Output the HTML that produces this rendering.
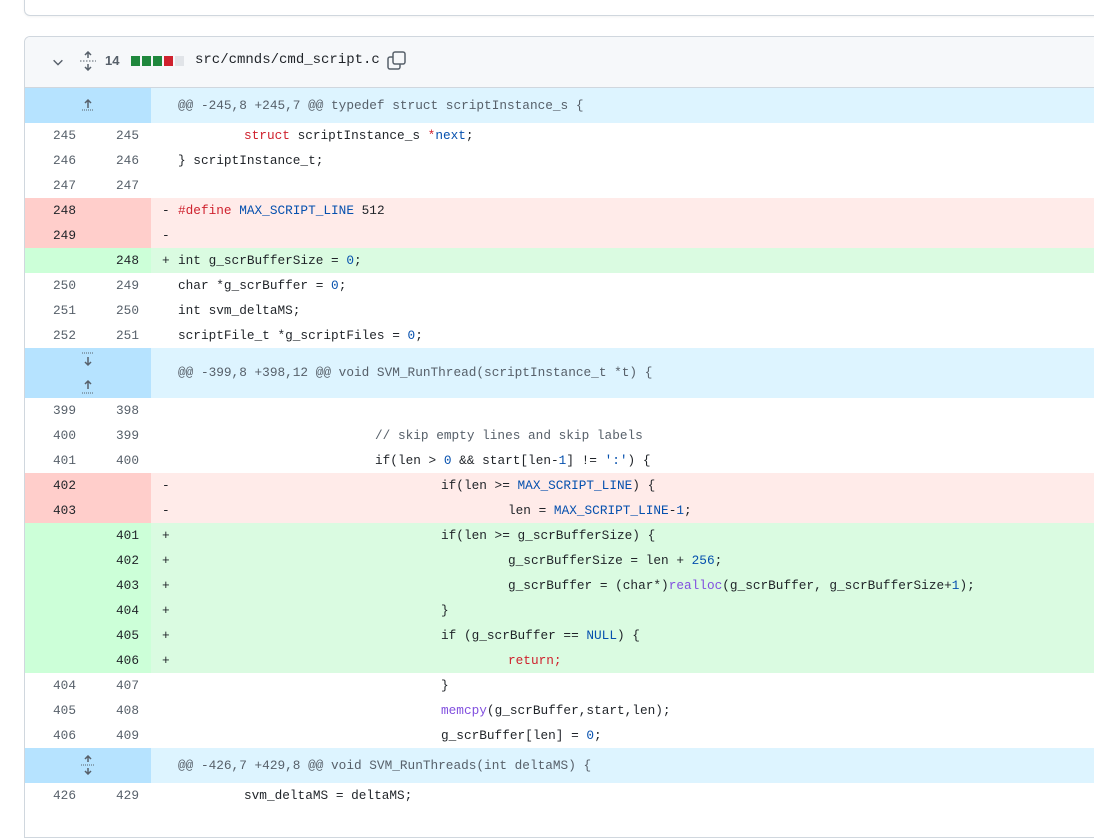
<!DOCTYPE html>
<html><head><style>
body{margin:0;background:#fff;width:1094px;height:793px;overflow:hidden;position:relative;font-family:"Liberation Sans",sans-serif}
.top{position:absolute;left:24px;top:-10px;width:1100px;height:24px;border:1px solid #d0d7de;border-radius:6px;box-shadow:0 1px 2px rgba(0,0,0,.05)}
.card{position:absolute;left:24px;top:36px;width:1100px;height:800px;border:1px solid #d0d7de;border-radius:6px 0 0 0;overflow:hidden}
.hdr{height:50px;background:#f6f8fa;border-bottom:1px solid #d0d7de;position:relative}
.row{position:relative;height:25px;font:12.75px/25px "Liberation Mono",monospace;color:#1f2328;white-space:pre}
.n1,.n2{position:absolute;top:0;height:100%;text-align:right;color:#57606a}
.n1{left:0;width:51px}
.n2{left:63px;width:51px}
.nbg{position:absolute;left:0;top:0;width:126px;height:100%}
.sg{position:absolute;left:137px}
.c{position:absolute;left:153px}
.del{background:#ffebe9}.del .nbg{background:#ffcecb}.del .n1,.del .n2{color:#1f2328}
.add{background:#dafbe1}.add .nbg{background:#ccffd8}.add .n1,.add .n2{color:#1f2328}
.hunk{background:#ddf4ff;color:#57606a}.hunk .nbg{background:#b6e3ff}
.k{color:#cf222e}.b{color:#0550ae}.f{color:#8250df}.cm{color:#57606a}
</style></head><body>
<div class="top"></div>
<div class="card">
<div class="hdr">
<svg style="position:absolute;left:26px;top:18px" width="14" height="14" viewBox="0 0 16 16"><path d="M3 6l5 5 5-5" fill="none" stroke="#57606a" stroke-width="1.6"/></svg>
<svg style="position:absolute;left:54px;top:14px" width="18" height="20" viewBox="0 0 18 20"><path d="M9 1v6M6 4l3-3 3 3M9 19v-6M6 16l3 3 3-3" fill="none" stroke="#57606a" stroke-width="1.5"/><path d="M1 10h16" stroke="#57606a" stroke-dasharray="1.5 1.5"/></svg>
<span style="position:absolute;left:80px;top:16px;font:bold 13px 'Liberation Sans';color:#57606a">14</span>
<span style="position:absolute;left:106px;top:19px;display:flex;gap:2px"><i style="width:9px;height:10px;background:#1f883d"></i><i style="width:9px;height:10px;background:#1f883d"></i><i style="width:9px;height:10px;background:#1f883d"></i><i style="width:9px;height:10px;background:#cf222e"></i><i style="width:9px;height:10px;background:#e1e4e8"></i></span>
<span style="position:absolute;left:170px;top:15px;font:14px 'Liberation Mono',monospace;color:#1f2328">src/cmnds/cmd_script.c</span>
<svg style="position:absolute;left:362px;top:14px" width="20" height="20" viewBox="0 0 20 20"><rect x="1" y="6" width="12" height="12" rx="2" fill="none" stroke="#57606a" stroke-width="1.5"/><rect x="6" y="1" width="12" height="12" rx="2" fill="#f6f8fa" stroke="#57606a" stroke-width="1.5"/></svg>
</div>
<div class="row hunk" style="height:35px;line-height:35px"><div class="nbg"><svg style="position:absolute;left:55px;top:8px" width="16" height="16" viewBox="0 0 16 16"><path d="M8 12V4M5 7l3-3 3 3" fill="none" stroke="#57606a" stroke-width="1.5"/><path d="M2 14h12" stroke="#57606a" stroke-dasharray="1 1"/></svg></div><span class="c">@@ -245,8 +245,7 @@ typedef struct scriptInstance_s {</span></div>
<div class="row"><span class="n1">245</span><span class="n2">245</span><span class="c" style="left:219px"><span class="k">struct</span> scriptInstance_s <span class="k">*</span><span class="b">next</span>;</span></div>
<div class="row"><span class="n1">246</span><span class="n2">246</span><span class="c">} scriptInstance_t;</span></div>
<div class="row"><span class="n1">247</span><span class="n2">247</span></div>
<div class="row del"><div class="nbg"></div><span class="n1">248</span><span class="sg">-</span><span class="c"><span class="k">#define</span> <span class="b">MAX_SCRIPT_LINE</span> 512</span></div>
<div class="row del"><div class="nbg"></div><span class="n1">249</span><span class="sg">-</span></div>
<div class="row add"><div class="nbg"></div><span class="n2">248</span><span class="sg">+</span><span class="c">int g_scrBufferSize = <span class="b">0</span>;</span></div>
<div class="row"><span class="n1">250</span><span class="n2">249</span><span class="c">char *g_scrBuffer = <span class="b">0</span>;</span></div>
<div class="row"><span class="n1">251</span><span class="n2">250</span><span class="c">int svm_deltaMS;</span></div>
<div class="row"><span class="n1">252</span><span class="n2">251</span><span class="c">scriptFile_t *g_scriptFiles = <span class="b">0</span>;</span></div>
<div class="row hunk" style="height:50px;line-height:50px"><div class="nbg"><svg style="position:absolute;left:55px;top:4px" width="16" height="42" viewBox="0 0 16 42"><path d="M2 1h12M2 41h12" stroke="#57606a" stroke-dasharray="1 1"/><path d="M8 5v8M5 10l3 3 3-3M8 37v-8M5 32l3-3 3 3" fill="none" stroke="#57606a" stroke-width="1.5"/></svg></div><span class="c">@@ -399,8 +398,12 @@ void SVM_RunThread(scriptInstance_t *t) {</span></div>
<div class="row"><span class="n1">399</span><span class="n2">398</span></div>
<div class="row"><span class="n1">400</span><span class="n2">399</span><span class="c cm" style="left:350px">// skip empty lines and skip labels</span></div>
<div class="row"><span class="n1">401</span><span class="n2">400</span><span class="c" style="left:350px">if(len &gt; <span class="b">0</span> &amp;&amp; start[len-<span class="b">1</span>] != <span class="b">':'</span>) {</span></div>
<div class="row del"><div class="nbg"></div><span class="n1">402</span><span class="sg">-</span><span class="c" style="left:416px">if(len &gt;= <span class="b">MAX_SCRIPT_LINE</span>) {</span></div>
<div class="row del"><div class="nbg"></div><span class="n1">403</span><span class="sg">-</span><span class="c" style="left:483px">len = <span class="b">MAX_SCRIPT_LINE</span>-<span class="b">1</span>;</span></div>
<div class="row add"><div class="nbg"></div><span class="n2">401</span><span class="sg">+</span><span class="c" style="left:416px">if(len &gt;= g_scrBufferSize) {</span></div>
<div class="row add"><div class="nbg"></div><span class="n2">402</span><span class="sg">+</span><span class="c" style="left:483px">g_scrBufferSize = len + <span class="b">256</span>;</span></div>
<div class="row add"><div class="nbg"></div><span class="n2">403</span><span class="sg">+</span><span class="c" style="left:483px">g_scrBuffer = (char*)<span class="f">realloc</span>(g_scrBuffer, g_scrBufferSize+<span class="b">1</span>);</span></div>
<div class="row add"><div class="nbg"></div><span class="n2">404</span><span class="sg">+</span><span class="c" style="left:416px">}</span></div>
<div class="row add"><div class="nbg"></div><span class="n2">405</span><span class="sg">+</span><span class="c" style="left:416px">if (g_scrBuffer == <span class="b">NULL</span>) {</span></div>
<div class="row add"><div class="nbg"></div><span class="n2">406</span><span class="sg">+</span><span class="c k" style="left:483px">return;</span></div>
<div class="row"><span class="n1">404</span><span class="n2">407</span><span class="c" style="left:416px">}</span></div>
<div class="row"><span class="n1">405</span><span class="n2">408</span><span class="c" style="left:416px"><span class="f">memcpy</span>(g_scrBuffer,start,len);</span></div>
<div class="row"><span class="n1">406</span><span class="n2">409</span><span class="c" style="left:416px">g_scrBuffer[len] = <span class="b">0</span>;</span></div>
<div class="row hunk" style="height:35px;line-height:35px"><div class="nbg"><svg style="position:absolute;left:55px;top:7px" width="16" height="20" viewBox="0 0 16 20"><path d="M8 1v6M5 4l3-3 3 3M8 19v-6M5 16l3 3 3-3" fill="none" stroke="#57606a" stroke-width="1.5"/><path d="M1 10h14" stroke="#57606a" stroke-dasharray="1 1"/></svg></div><span class="c">@@ -426,7 +429,8 @@ void SVM_RunThreads(int deltaMS) {</span></div>
<div class="row"><span class="n1">426</span><span class="n2">429</span><span class="c" style="left:219px">svm_deltaMS = deltaMS;</span></div>
</div>
</body></html>
